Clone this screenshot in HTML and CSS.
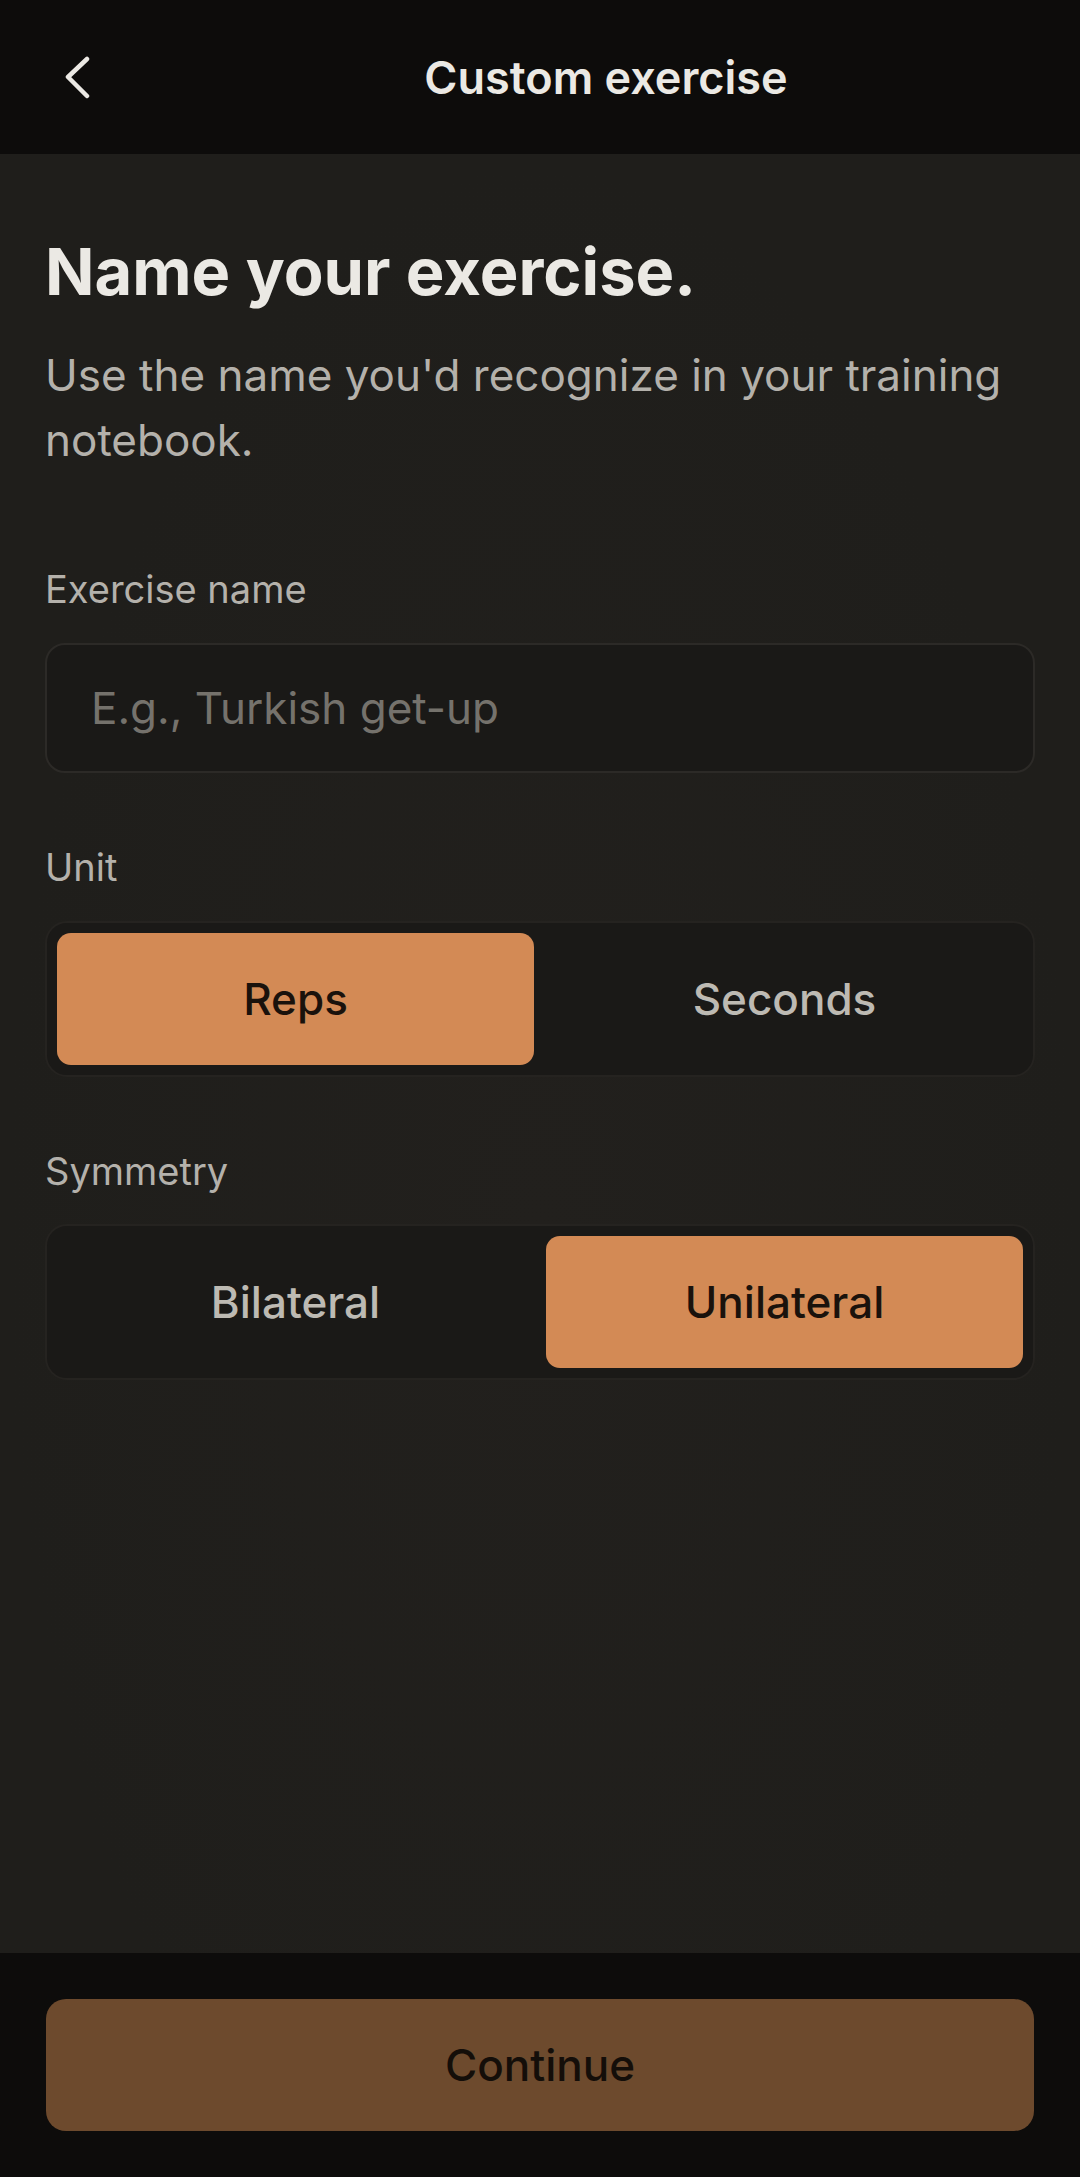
FILE: index.html
```html
<!DOCTYPE html>
<html lang="en">
<head>
    <meta charset="UTF-8">
    <meta name="viewport" content="width=device-width, initial-scale=1.0">
    <title>Custom exercise</title>
    <link rel="stylesheet" href="styles.css">
</head>
<body>
    <div class="screen">
        <header class="top-bar">
            <button class="back-btn" aria-label="Back">
                <svg width="32" height="44" viewBox="0 0 32 44" fill="none">
                    <path d="M25 4 L6 22 L25 41" stroke="#ebe9e4" stroke-width="4.5" stroke-linecap="round" stroke-linejoin="round"/>
                </svg>
            </button>
            <h1 class="top-title">Custom exercise</h1>
        </header>

        <main class="content">
            <h2 class="heading">Name your exercise.</h2>
            <p class="subtitle">Use the name you'd recognize in your training notebook.</p>

            <!-- Name field -->
            <div class="field">
                <label class="field-label" for="ex-name">Exercise name</label>
                <input id="ex-name" class="text-input" type="text" placeholder="E.g., Turkish get-up">
            </div>

            <!-- Unit -->
            <div class="field">
                <span class="field-label">Unit</span>
                <div class="segmented">
                    <button class="segment active">Reps</button>
                    <button class="segment">Seconds</button>
                </div>
            </div>

            <!-- Symmetry -->
            <div class="field">
                <span class="field-label">Symmetry</span>
                <div class="segmented">
                    <button class="segment">Bilateral</button>
                    <button class="segment active">Unilateral</button>
                </div>
            </div>
        </main>

        <footer class="bottom-bar">
            <button class="continue-btn">Continue</button>
        </footer>
    </div>
</body>
</html>
```

FILE: styles.css
```css
:root {
    --bar-bg: #0d0c0b;
    --page-bg: #1f1e1b;
    --field-bg: #1a1917;
    --field-border: #2c2a27;
    --accent: #d38a55;
    --accent-dim: #6d4a2d;
    --text: #ebe9e4;
    --text-muted: #b4b1ab;
    --placeholder: #75726c;
    --on-accent: #1a120c;
}

* {
    margin: 0;
    padding: 0;
    box-sizing: border-box;
    font-family: 'Inter', 'Noto Sans', sans-serif;
}

body {
    background-color: var(--page-bg);
    color: var(--text);
}

.screen {
    height: 2177px;
    display: flex;
    flex-direction: column;
}

.top-bar {
    height: 154px;
    background-color: var(--bar-bg);
    display: flex;
    align-items: center;
}

.back-btn {
    width: 132px;
    height: 100%;
    background: none;
    border: none;
    display: flex;
    align-items: center;
    padding-left: 62px;
}

.top-title {
    flex: 1;
    text-align: center;
    font-size: 45px;
    font-weight: 600;
    color: var(--text);
}

.content {
    flex: 1;
    padding: 79px 45px 0;
    background: radial-gradient(ellipse at 50% 60%, #22201d 0%, var(--page-bg) 70%);
}

.heading {
    font-size: 65px;
    line-height: 1.2;
    font-weight: 700;
    color: var(--text);
}

.subtitle {
    margin-top: 32px;
    font-size: 44px;
    line-height: 65px;
    color: var(--text-muted);
}

.field {
    margin-top: 70px;
    display: flex;
    flex-direction: column;
    gap: 28px;
}

.subtitle + .field {
    margin-top: 92px;
}

.subtitle + .field .field-label {
    margin-bottom: 1px;
}

.field-label {
    font-size: 38px;
    line-height: 1.3;
    color: var(--text-muted);
}

.text-input {
    height: 130px;
    background-color: var(--field-bg);
    border: 2px solid var(--field-border);
    border-radius: 20px;
    padding: 0 44px;
    font-size: 44px;
    color: var(--text);
    outline: none;
}

.text-input::placeholder {
    color: var(--placeholder);
}

.segmented {
    height: 156px;
    background-color: var(--field-bg);
    border: 2px solid #252320;
    border-radius: 22px;
    padding: 10px;
    display: grid;
    grid-template-columns: 1fr 1fr;
    gap: 12px;
}

.segment {
    background: none;
    border: none;
    border-radius: 14px;
    font-size: 44px;
    font-weight: 500;
    color: #bdbab3;
}

.segment.active {
    background-color: var(--accent);
    color: var(--on-accent);
}

.bottom-bar {
    background-color: var(--bar-bg);
    padding: 46px;
}

.continue-btn {
    width: 100%;
    height: 132px;
    background-color: var(--accent-dim);
    border: none;
    border-radius: 20px;
    font-size: 44px;
    font-weight: 500;
    color: #140e09;
}
```
